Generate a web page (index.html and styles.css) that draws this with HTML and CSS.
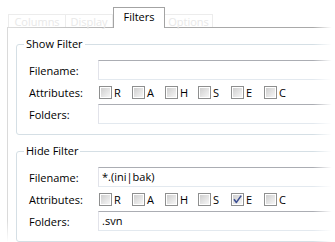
FILE: index.html
```html
<!DOCTYPE html>
<html>
<head>
<meta charset="utf-8">
<link rel="stylesheet" href="styles.css">
</head>
<body>
<div class="screen">
  <div class="tabs">
    <div class="tab w-columns">Columns</div>
    <div class="tab w-display">Display</div>
    <div class="tab active">Filters</div>
    <div class="tab w-options">Options</div>
  </div>
  <div class="panel">
    <fieldset class="group">
      <legend>Show Filter</legend>
      <div class="rows">
        <div class="row"><span class="label">Filename:</span><div class="field"></div></div>
        <div class="row"><span class="label">Attributes:</span>
          <div class="checks">
            <span class="chk"><span class="box"></span>R</span>
            <span class="chk"><span class="box"></span>A</span>
            <span class="chk"><span class="box"></span>H</span>
            <span class="chk"><span class="box"></span>S</span>
            <span class="chk"><span class="box"></span>E</span>
            <span class="chk"><span class="box"></span>C</span>
          </div>
        </div>
        <div class="row"><span class="label">Folders:</span><div class="field"></div></div>
      </div>
    </fieldset>
    <fieldset class="group">
      <legend>Hide Filter</legend>
      <div class="rows">
        <div class="row"><span class="label">Filename:</span><div class="field">*.(ini|bak)</div></div>
        <div class="row"><span class="label">Attributes:</span>
          <div class="checks">
            <span class="chk"><span class="box"></span>R</span>
            <span class="chk"><span class="box"></span>A</span>
            <span class="chk"><span class="box"></span>H</span>
            <span class="chk"><span class="box"></span>S</span>
            <span class="chk"><span class="box checked"><svg width="9" height="9" viewBox="0 0 9 9"><path d="M1 4.2 L3.4 7.4 L8.2 0.6" fill="none" stroke="#3c4f93" stroke-width="1.6" stroke-linejoin="round"/></svg></span>E</span>
            <span class="chk"><span class="box"></span>C</span>
          </div>
        </div>
        <div class="row"><span class="label">Folders:</span><div class="field">.svn</div></div>
      </div>
    </fieldset>
  </div>
  <div class="fade-right"></div>
  <div class="fade-corner"></div>
</div>
</body>
</html>
```

FILE: styles.css
```css
html, body {
  margin: 0;
  padding: 0;
  background: #fff;
}
.screen {
  position: relative;
  width: 335px;
  height: 242px;
  overflow: hidden;
  font-family: "Open Sans", "Noto Sans", sans-serif;
  font-size: 11px;
  color: #000;
}
.tabs {
  position: relative;
  z-index: 1;
  display: flex;
  align-items: flex-end;
  height: 27px;
  padding-left: 8px;
}
.tab {
  box-sizing: border-box;
  height: 13px;
  border: 1px solid #ececec;
  border-bottom: none;
  border-left: none;
  color: #e8e8e8;
  text-align: center;
  line-height: 13px;
  white-space: nowrap;
}
.w-columns { width: 58px; border-left: 1px solid #ececec; }
.w-display { width: 47px; }
.w-options { width: 48px; border-left: none; }
.tab.active {
  width: 52px;
  height: 21px;
  margin-bottom: -1px;
  border: 1px solid #a3a3a3;
  border-bottom: none;
  background: #fff;
  color: #000;
  line-height: 18px;
}
.panel {
  margin-left: 7px;
  padding: 9px 0 0 8px;
  border-left: 1px solid #dadada;
  background: linear-gradient(to right, #dcdcdc, #a9a9a9 120px) top left / 100% 1px no-repeat;
  height: 240px;
}
.group {
  margin: 0 -30px 8px 0;
  padding: 0;
  border: 1px solid #d5dfe5;
  border-radius: 3px;
}
.group legend {
  margin-left: 7px;
  padding: 0 2px;
  line-height: 16px;
  font-size: 11px;
}
.rows {
  display: flex;
  flex-direction: column;
  gap: 2px;
  padding: 8px 0 10px 12px;
}
.row {
  display: flex;
  align-items: center;
  height: 20px;
}
.label {
  flex: none;
  width: 69px;
}
.field {
  flex: 1;
  box-sizing: border-box;
  height: 20px;
  border: 1px solid #e2e3ea;
  border-top-color: #abadb3;
  border-bottom-color: #e3e9ef;
  padding: 0 3px;
  line-height: 17px;
}
.checks {
  display: flex;
  margin-left: 1px;
}
.chk {
  display: flex;
  align-items: center;
  gap: 2px;
  width: 33px;
}
.box {
  box-sizing: border-box;
  width: 13px;
  height: 13px;
  padding: 1px;
  border: 1px solid #8e8f8f;
  background: linear-gradient(135deg, #cfcfcf, #f6f6f6) content-box, #fff;
  display: flex;
  align-items: center;
  justify-content: center;
}
.box svg { display: block; }
.fade-right {
  position: absolute;
  top: 0;
  right: 0;
  width: 22px;
  height: 100%;
  background: linear-gradient(to right, rgba(255,255,255,0), #fff 85%);
}
.fade-corner {
  position: absolute;
  left: 0;
  bottom: 0;
  width: 14px;
  height: 22px;
  background: linear-gradient(to bottom, rgba(255,255,255,0), #fff);
}
```
